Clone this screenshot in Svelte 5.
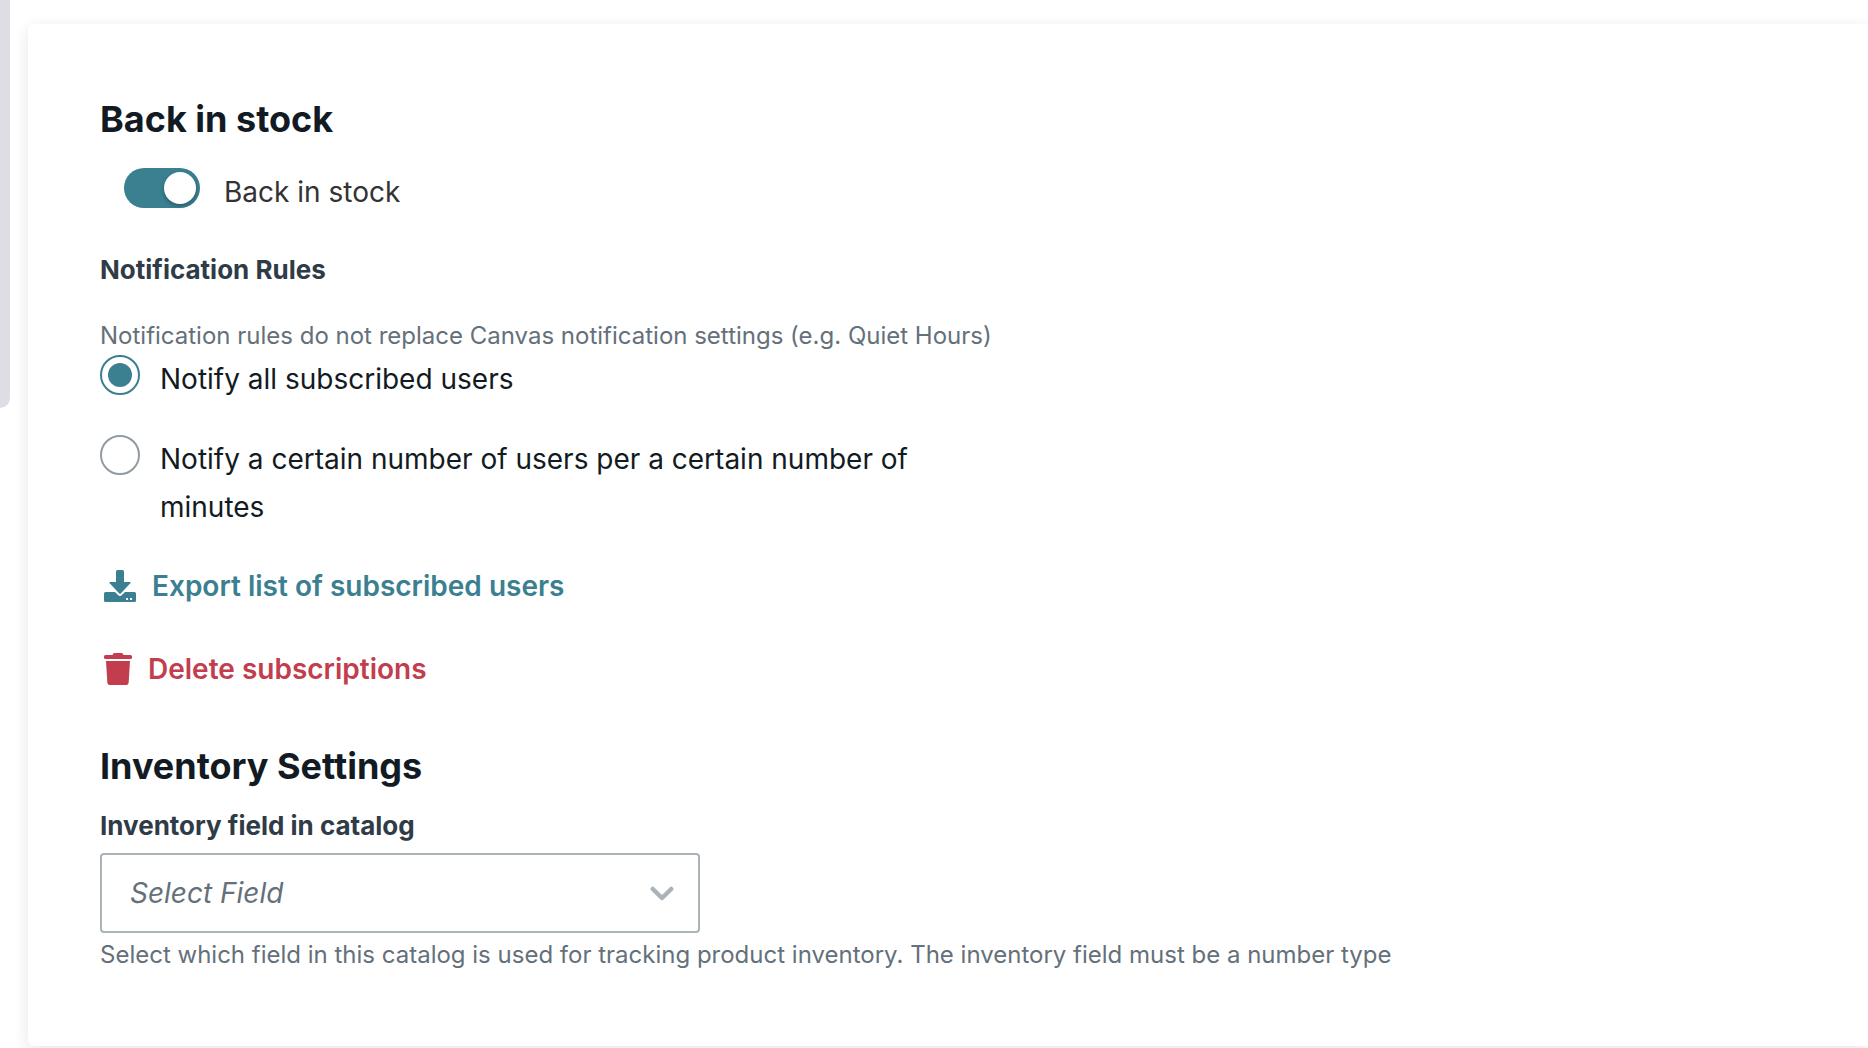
<script>
  let backInStock = $state(true);
  let rule = $state('all');
  let field = $state('');
</script>

<div class="page">
  <div class="rail" aria-hidden="true"></div>

  <main class="card">
    <section>
      <h2>Back in stock</h2>

      <label class="toggle">
        <input type="checkbox" role="switch" bind:checked={backInStock} />
        <span>Back in stock</span>
      </label>

      <div role="radiogroup" aria-labelledby="rules-title">
        <h3 id="rules-title">Notification Rules</h3>
        <p class="hint rules-hint">
          Notification rules do not replace Canvas notification settings (e.g. Quiet Hours)
        </p>
        <div class="options">
          <label class="option">
            <input type="radio" name="rule" value="all" bind:group={rule} />
            <span>Notify all subscribed users</span>
          </label>
          <label class="option">
            <input type="radio" name="rule" value="limited" bind:group={rule} />
            <span>Notify a certain number of users per a certain number of minutes</span>
          </label>
        </div>
      </div>

      <div class="actions">
        <button type="button" class="action export">
          <svg width="32" height="32" viewBox="0 0 32 32" fill="currentColor" aria-hidden="true">
            <path d="M13.500 0h5q1.500 0 1.500 1.500V12h5.800q1.700 0 .5 1.200L17 23.300q-1 1-2 0L5.700 13.200Q4.500 12 6.200 12H12V1.500Q12 0 13.500 0z" />
            <path fill-rule="evenodd" d="M1.500 22H11l3.300 3.300q1.700 1.500 3.400 0L21 22h9.500q1.500 0 1.500 1.500v7q0 1.500-1.500 1.500h-29Q0 32 0 30.500v-7Q0 22 1.500 22zM22 28v2h2v-2zm4 0v2h2v-2z" />
          </svg>
          Export list of subscribed users
        </button>
        <button type="button" class="action delete">
          <svg width="28" height="32" viewBox="0 0 28 32" fill="currentColor" aria-hidden="true">
            <path d="M1.500 2H8.500l.6-1.200Q9.600 0 10.500 0h7q.9 0 1.400.8L19.500 2h7Q28 2 28 3.500v1Q28 6 26.500 6h-25Q0 6 0 4.500v-1Q0 2 1.500 2z" />
            <path d="M2 8h24l-1.300 21.200Q24.500 32 21.700 32H6.300q-2.800 0-3-2.800z" />
          </svg>
          Delete subscriptions
        </button>
      </div>
    </section>

    <section class="inventory">
      <h2>Inventory Settings</h2>
      <label class="field-label" for="inventory-field">Inventory field in catalog</label>
      <div class="select">
        <select id="inventory-field" bind:value={field} aria-describedby="inventory-hint">
          <option value="">Select Field</option>
        </select>
        <svg class="chevron" width="24" height="16" viewBox="0 0 24 16" fill="none" aria-hidden="true">
          <path d="M2.800 4 12 13 21.200 4" stroke="currentColor" stroke-width="4.500" stroke-linecap="round" stroke-linejoin="round" />
        </svg>
      </div>
      <p class="hint" id="inventory-hint">
        Select which field in this catalog is used for tracking product inventory. The inventory field must be a number type
      </p>
    </section>
  </main>
</div>

<style>
  :global(body) {
    margin: 0;
    background: #fff;
  }

  .page {
    display: flex;
    align-items: flex-start;
    gap: 18px;
    overflow: hidden;
    padding-bottom: 2px;
    font-family: Inter, 'Open Sans', sans-serif;
    font-size: 28px;
    line-height: 48px;
    color: #121b23;
  }

  .rail {
    flex: none;
    width: 10px;
    height: 408px;
    border-radius: 0 0 10px 0;
    background: #dedde3;
  }

  .card {
    flex: 1;
    min-width: 0;
    margin-top: 24px;
    padding: 73px 72px 72px;
    border-radius: 6px 0 0 6px;
    background: #fff;
    box-shadow: 0 4px 16px rgba(0, 0, 0, 0.1);
  }

  h2,
  h3,
  p {
    margin: 0;
  }

  h2 {
    font-size: 36px;
    line-height: 44px;
    font-weight: 700;
  }

  h3,
  .field-label {
    font-size: 26px;
    line-height: 32px;
    font-weight: 700;
    color: #2f3b46;
  }

  h3 {
    margin-top: 38px;
  }

  .hint {
    font-size: 24px;
    line-height: 38px;
    color: #64707a;
  }

  .rules-hint {
    margin-top: 31px;
  }

  input {
    flex: none;
    appearance: none;
    margin: 0;
    cursor: pointer;
  }

  .toggle {
    display: flex;
    gap: 24px;
    width: fit-content;
    margin: 27px 0 0 24px;
    color: #333;
  }

  .toggle input {
    display: flex;
    box-sizing: border-box;
    width: 76px;
    height: 40px;
    padding: 4px;
    border-radius: 20px;
    background: #a9b3b8;
  }

  .toggle input::before {
    content: '';
    width: 32px;
    height: 32px;
    border-radius: 50%;
    background: #fff;
    box-shadow: 0 2px 4px rgba(0, 0, 0, 0.3);
  }

  .toggle input:checked {
    justify-content: flex-end;
    background: #3a8091;
  }

  .options {
    display: grid;
    gap: 32px;
    max-width: 820px;
  }

  .option {
    display: flex;
    gap: 20px;
  }

  .option input {
    display: grid;
    place-items: center;
    box-sizing: border-box;
    width: 40px;
    height: 40px;
    border: 2px solid #919ba3;
    border-radius: 50%;
  }

  .option input:checked {
    border-color: #3a8091;
  }

  .option input:checked::before {
    content: '';
    width: 24px;
    height: 24px;
    border-radius: 50%;
    background: #3a8091;
  }

  .actions {
    display: grid;
    justify-items: start;
    gap: 35px;
    margin-top: 31px;
  }

  .action {
    display: flex;
    align-items: center;
    gap: 16px;
    padding: 0 4px;
    border: 0;
    background: none;
    font: inherit;
    font-weight: 600;
    cursor: pointer;
  }

  .export {
    color: #3a8091;
  }

  .delete {
    color: #c23e4e;
  }

  .inventory {
    margin-top: 51px;
  }

  .field-label {
    display: block;
    margin-top: 22px;
  }

  .select {
    display: grid;
    align-items: center;
    max-width: 600px;
    margin: 11px 0 3px;
  }

  .select > * {
    grid-area: 1 / 1;
  }

  select {
    appearance: none;
    box-sizing: border-box;
    width: 100%;
    height: 80px;
    padding: 0 64px 0 28px;
    border: 2px solid #a9b3b8;
    border-radius: 4px;
    background: #fff;
    font: inherit;
    font-style: italic;
    color: #64707a;
    cursor: pointer;
  }

  .chevron {
    justify-self: end;
    margin-right: 26px;
    color: #a9b3b8;
    pointer-events: none;
  }
</style>
